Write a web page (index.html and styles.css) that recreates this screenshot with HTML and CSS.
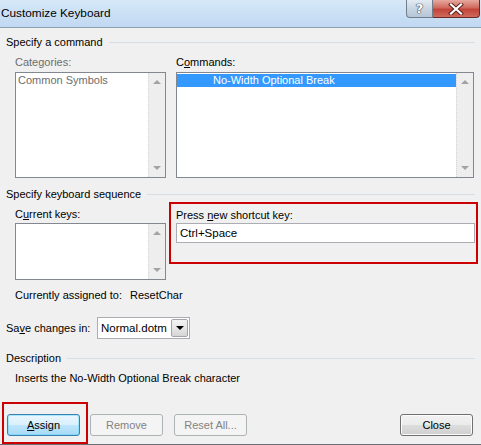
FILE: index.html
```html
<!DOCTYPE html>
<html>
<head>
<meta charset="utf-8">
<link rel="stylesheet" href="styles.css">
</head>
<body>
<div class="window">
  <div class="titlebar">
    <span class="title">Customize Keyboard</span>
    <div class="caption">
      <div class="cbtn help"><span class="qmark">?</span></div>
      <div class="cbtn close">
        <svg width="18" height="12" viewBox="0 0 18 12">
          <path d="M4 1.5 L14 10.5 M14 1.5 L4 10.5" stroke="#5a1e18" stroke-width="4" stroke-linecap="square" fill="none"/>
          <path d="M4 1.5 L14 10.5 M14 1.5 L4 10.5" stroke="#ffffff" stroke-width="2.2" stroke-linecap="square" fill="none"/>
        </svg>
      </div>
    </div>
  </div>

  <div class="content">
    <div class="group-head"><span>Specify a command</span><i class="rule"></i></div>
    <div class="cmd-cols">
      <div class="col">
        <div class="label disabled">Categories:</div>
        <div class="listbox tall">
          <div class="items"><div class="item dis">Common Symbols</div></div>
          <div class="vscroll"><i class="arr up"></i><i class="arr down"></i></div>
        </div>
      </div>
      <div class="col">
        <div class="label">C<u>o</u>mmands:</div>
        <div class="listbox tall">
          <div class="items"><div class="item sel">No-Width Optional Break</div></div>
          <div class="vscroll"><i class="arr up"></i><i class="arr down"></i></div>
        </div>
      </div>
    </div>

    <div class="group-head second"><span>Specify keyboard sequence</span><i class="rule"></i></div>
    <div class="key-cols">
      <div class="col keys-left">
        <div class="label">C<u>u</u>rrent keys:</div>
        <div class="listbox short">
          <div class="items"></div>
          <div class="vscroll"><i class="arr up"></i><i class="arr down"></i></div>
        </div>
      </div>
      <div class="redbox newkey">
        <div class="label">Press <u>n</u>ew shortcut key:</div>
        <div class="textbox">Ctrl+Space</div>
      </div>
    </div>

    <div class="assigned"><span class="a-label">Currently assigned to:</span><span>ResetChar</span></div>

    <div class="save-row">
      <span class="s-label">Sa<u>v</u>e changes in:</span>
      <div class="combo"><span class="combo-text">Normal.dotm</span><span class="combo-btn"><i class="tri"></i></span></div>
    </div>

    <div class="group-head desc-head"><span>Description</span><i class="rule"></i></div>
    <div class="desc">Inserts the No-Width Optional Break character</div>
  </div>

  <div class="footer">
    <div class="redbox assignbox"><div class="btn default"><u>A</u>ssign</div></div>
    <div class="btn disabled remove">Remove</div>
    <div class="btn disabled resetall">Reset All...</div>
    <div class="btn closebtn">Close</div>
  </div>
</div>
</body>
</html>
```

FILE: styles.css
```css
* { box-sizing: border-box; }
html, body { margin: 0; padding: 0; }
body {
  width: 481px;
  height: 445px;
  overflow: hidden;
  background: #f0f0f0;
  font-family: "Liberation Sans", Arial, sans-serif;
  font-size: 11px;
  line-height: 14px;
  color: #000;
}
u { text-decoration: underline; text-underline-offset: 1px; }

.window {
  width: 481px;
  height: 445px;
  display: flex;
  flex-direction: column;
  border-bottom: 1px solid #6b6f75;
}

/* title bar */
.titlebar {
  height: 28px;
  flex: none;
  display: flex;
  align-items: flex-start;
  background: linear-gradient(#d6e8f9, #c0d8f1);
  border-bottom: 1px solid #8fa1b3;
}
.title {
  margin: 6px 0 0 1px;
  font-size: 11.8px;
  line-height: 15px;
}
.caption {
  margin-left: auto;
  margin-right: 1px;
  display: flex;
  height: 18px;
}
.cbtn {
  height: 18px;
  display: flex;
  align-items: center;
  justify-content: center;
}
.help {
  width: 27px;
  border: 1px solid #6f7d8d;
  border-top: none;
  border-radius: 0 0 0 4px;
  background: linear-gradient(#e4ebf3, #c9d5e2 50%, #b6c5d6);
}
.qmark {
  font-family: "DejaVu Sans", sans-serif;
  font-weight: bold;
  font-size: 13px;
  line-height: 14px;
  color: #fff;
  text-shadow: 0 0 1px #2e3e52, 0 0 1px #2e3e52, 0 0 1px #2e3e52;
}
.close {
  width: 47px;
  border: 1px solid #6b2a24;
  border-top: none;
  border-left: none;
  border-radius: 0 0 4px 0;
  background: linear-gradient(#e6a99f, #d06a5e 45%, #c2443a 55%, #cf6a5c);
}

/* content */
.content {
  padding: 7px 6px 0 6px;
}
.group-head {
  display: flex;
  align-items: center;
  height: 14px;
}
.group-head .rule {
  flex: 1;
  height: 1px;
  margin-left: 6px;
  background: #d6dde3;
}
.group-head.second { margin-top: 9px; }
.group-head.desc-head { margin-top: 12px; }

.label { height: 14px; white-space: nowrap; }
.disabled { color: #6d6d6d; }

.cmd-cols {
  margin: 6px 0 0 9px;
  display: grid;
  grid-template-columns: 151px 298px;
  column-gap: 10px;
}
.col .listbox { margin-top: 3px; }

.listbox {
  border: 1px solid #828790;
  background: #fff;
  display: flex;
}
.listbox.tall { height: 106px; }
.listbox.short { height: 57px; }
.items {
  flex: 1;
  padding: 1px 0 0 0;
}
.item {
  height: 13px;
  line-height: 13px;
  white-space: nowrap;
}
.item.dis { color: #6d6d6d; padding-left: 2px; }
.item.sel {
  background: #3399ff;
  color: #fff;
  padding-left: 36px;
}
.vscroll {
  width: 17px;
  flex: none;
  background: #eeeeee;
  border-left: 1px dotted #d4d4d4;
  display: flex;
  flex-direction: column;
  justify-content: space-between;
  align-items: center;
  padding: 7px 0 7px 0;
}
.arr {
  width: 0;
  height: 0;
  border-left: 4px solid transparent;
  border-right: 4px solid transparent;
}
.arr.up { border-bottom: 4px solid #a3a3a3; }
.arr.down { border-top: 4px solid #a3a3a3; }

.key-cols {
  margin: 1px 0 0 9px;
  display: flex;
  align-items: flex-start;
}
.keys-left {
  width: 151px;
  flex: none;
  padding-top: 5px;
}
.keys-left .listbox { margin-top: 2px; }

.redbox { border: 2px solid #cc0000; flex: none; }
.newkey {
  margin-left: 3px;
  width: 309px;
  height: 62px;
  padding: 4px 1px 0 5px;
}
.textbox {
  margin-top: 1px;
  height: 20px;
  border: 1px solid #abadb3;
  background: #fff;
  padding: 2px 0 0 3px;
  line-height: 14px;
  font-size: 11.5px;
}

.assigned {
  margin: 8px 0 0 9px;
  display: flex;
}
.a-label { width: 115px; }

.save-row {
  margin-top: 15px;
  display: flex;
  align-items: center;
}
.s-label { width: 91px; }
.combo {
  width: 93px;
  height: 22px;
  border: 1px solid #abadb3;
  background: #fff;
  display: flex;
  align-items: center;
  padding: 1px;
}
.combo-text { flex: 1; padding-left: 2px; font-size: 11.5px; }
.combo-btn {
  width: 17px;
  height: 18px;
  border: 1px solid #a0a4aa;
  border-radius: 2px;
  background: linear-gradient(#f3f3f3, #e6e6e6 50%, #d6d6d6);
  display: flex;
  align-items: center;
  justify-content: center;
}
.tri {
  width: 0;
  height: 0;
  border-left: 4px solid transparent;
  border-right: 4px solid transparent;
  border-top: 4px solid #000;
}

.desc {
  margin: 6px 0 0 9px;
}

/* footer */
.footer {
  margin-top: auto;
  height: 42px;
  display: flex;
  align-items: flex-start;
}
.assignbox {
  margin-left: 2px;
  width: 86px;
  height: 42px;
  padding: 10px 6px 6px 3px;
}
.btn {
  width: 73px;
  height: 22px;
  flex: none;
  border: 1px solid #707070;
  border-radius: 3px;
  background: linear-gradient(#f2f2f2, #ebebeb 50%, #dddddd 51%, #cfcfcf);
  display: flex;
  align-items: center;
  justify-content: center;
  box-shadow: inset 0 0 0 1px #fcfcfc;
}
.btn.default {
  border-color: #3c7fb1;
  background: linear-gradient(#eaf6fd, #d9f0fc 50%, #bee6fd 51%, #a7d9f5);
  box-shadow: inset 0 0 0 1px #48d4ff66;
}
.btn.disabled {
  margin-top: 12px;
  border-color: #adb2b5;
  background: #f4f4f4;
  color: #838383;
  box-shadow: none;
}
.remove { margin-left: 2px; }
.resetall { margin-left: 11px; }
.closebtn {
  margin-top: 12px;
  margin-left: auto;
  margin-right: 8px;
}
```
